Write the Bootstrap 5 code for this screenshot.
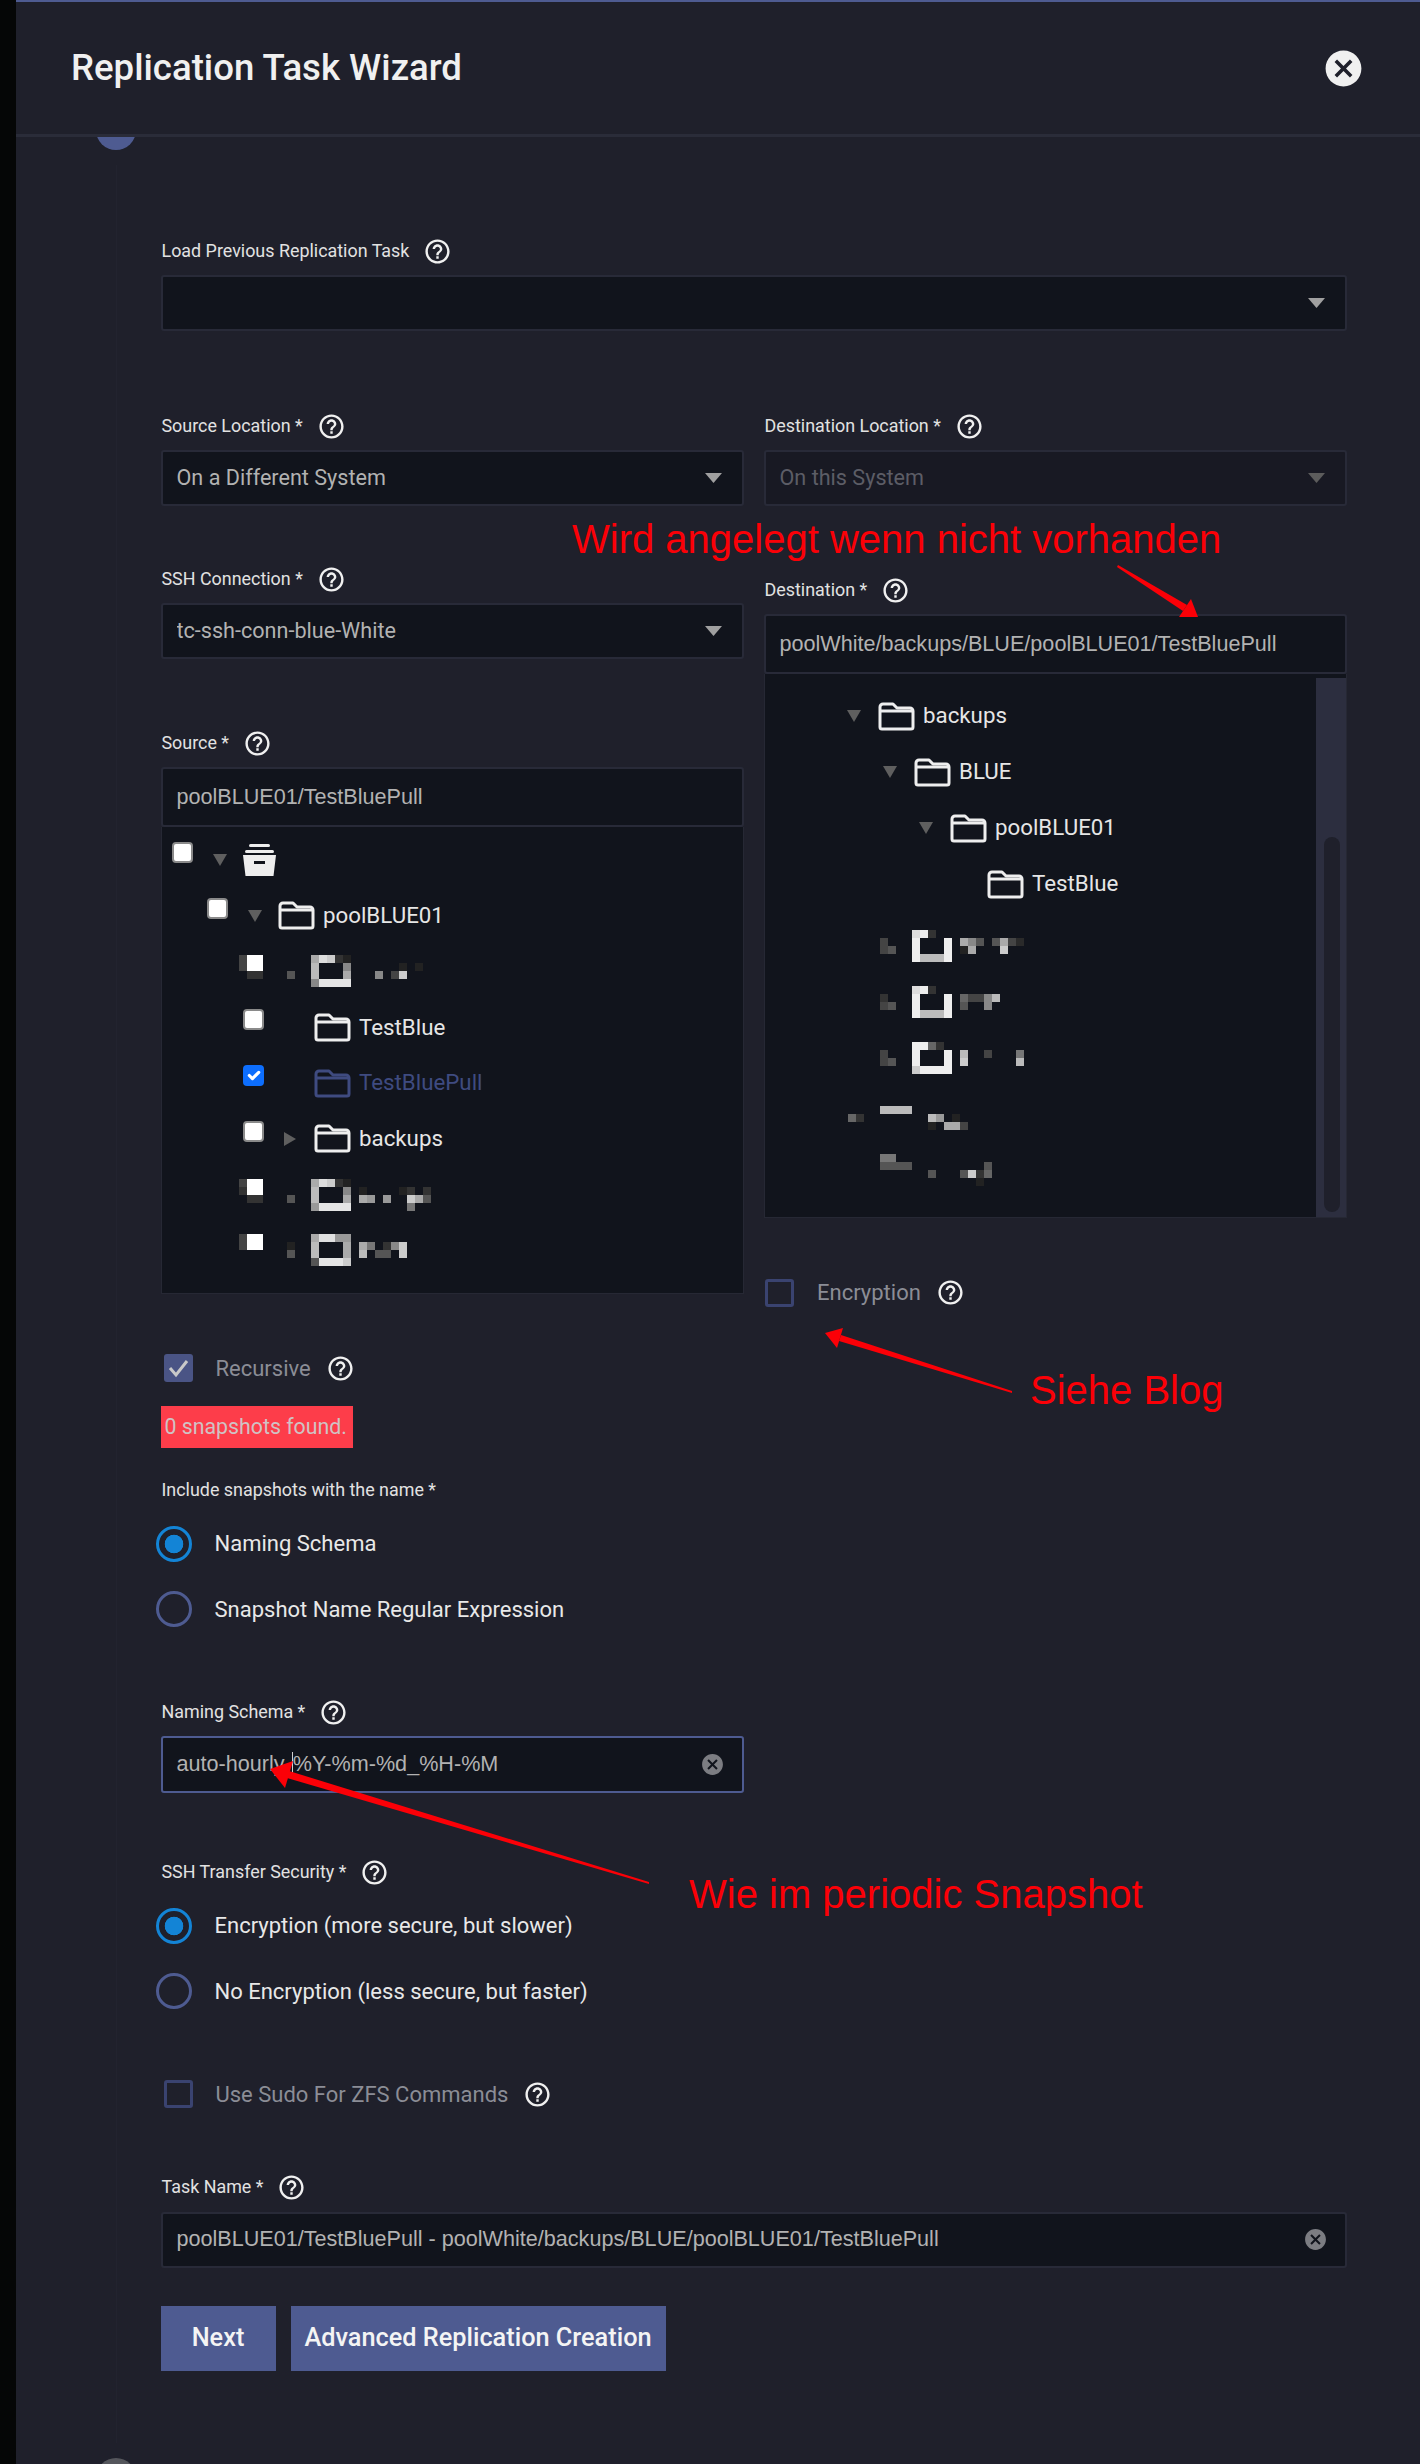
<!DOCTYPE html>
<html lang="en">

<head>
  <meta charset="UTF-8">
  <meta name="viewport" content="width=device-width, initial-scale=1.0">
  <title>Replication Task Wizard</title>
  <link rel="stylesheet" href="https://cdn.jsdelivr.net/npm/bootstrap@5.3.2/dist/css/bootstrap.min.css">
  <style>
    html, body { height: 100%; }
    body { background: #050606; font-family: Roboto, "Noto Sans", sans-serif; color: #e6e6e6; overflow: hidden; position: relative; }
    .wiz { margin-left: 16px; height: 2464px; background: #1f202b; border-top: 2px solid #4e5b91; }
    .wiz-head { height: 135px; padding: 0 55px; border-bottom: 3px solid #2a2c39; }
    .wiz-title { font-size: 36.6px; font-weight: 500; color: #f0f0f0; margin: 0; }
    .wiz-close { width: 43px; height: 43px; fill: #f0f0f0; }
    .wiz-body { height: 2327px; overflow: hidden; }
    .rail { width: 40px; margin-left: 80px; }
    .step-dot { width: 40px; height: 40px; border-radius: 50%; flex: none; }
    .step-now { background: #4e5b91; margin-top: -27px; }
    .step-next { background: #55565c; margin-top: 15px; }
    .rail-line { width: 1px; background: #22232f; margin-top: 15px; height: 2278px; flex: none; }
    .wiz-form { width: 1186px; margin-left: 24.5px; }
    .cols { gap: 20px; }
    .col-left { width: 583px; }
    .col-right { width: 583px; }
    .lbl { height: 24px; font-size: 17.9px; color: #e2e2e2; margin-bottom: 12px; padding-left: 1px; }
    .qm { width: 29px; height: 29px; fill: #f0f0f0; margin-left: 14px; flex: none; }
    .form-select, .form-control { border-radius: 3px; background-color: #11141c; border: 2px solid #282a38; color: #b2b2b2; height: 56px; font-size: 21.6px; padding: 0 44px 0 14px; box-shadow: none; }
    .form-select { background-image: url("data:image/svg+xml,%3Csvg xmlns='http://www.w3.org/2000/svg' viewBox='0 0 17 10'%3E%3Cpath fill='%23a0a0a0' d='M0 0h17l-8.5 10z'/%3E%3C/svg%3E"); background-size: 17px 10px; background-position: right 20px center; }
    .form-select:disabled { background-color: #181923; color: #5c5d66; background-image: url("data:image/svg+xml,%3Csvg xmlns='http://www.w3.org/2000/svg' viewBox='0 0 17 10'%3E%3Cpath fill='%235c5c5c' d='M0 0h17l-8.5 10z'/%3E%3C/svg%3E"); }
    .val { font-family: "Liberation Sans", Arial, sans-serif; font-size: 21.6px; }
    .path-box { height: 60px; }
    .clear-x { width: 25px; height: 25px; fill: #7c7d82; margin-left: auto; margin-right: -27px; flex: none; }
    .focus-box { border-color: #4e5b91; height: 57px; }
    .caret { width: 1px; height: 26px; background: #d0d0d0; margin-left: 0; }
    .tree { background: #11141c; border: 1px solid #262834; border-top: 0; font-size: 22.3px; }
    .tree-left { height: 467px; padding-top: 5px; }
    .tree-right { height: 544px; }
    .tree-inner { padding-top: 14px; }
    .t-row { height: 55.8px; }
    .t-row.d0 { padding-left: 10px; }
    .t-row.d1 { padding-left: 45px; }
    .t-row.d2 { padding-left: 81px; }
    .t-row .form-check-input { width: 21px; height: 21px; margin: 0 0 15px; border: 2px solid #8a8a8a; border-radius: 4px; flex: none; }
    .t-row .form-check-input:checked { background-color: #0d6efd; border: 0; background-size: 100%; }
    .tog { width: 50px; flex: none; padding-left: 20px; line-height: 0; }
    .tri { fill: #5f5f5f; }
    .fold { width: 37px; height: 29px; fill: none; stroke: #eeeeee; stroke-width: 3; stroke-linejoin: round; margin-right: 8.5px; flex: none; }
    .fold-sel { stroke: #3f4b80; }
    .name-sel { color: #3f4b80; }
    .arch { width: 33px; height: 33px; fill: #eeeeee; flex: none; }
    .mos-l { margin-left: 77px; }
    .r-row { height: 56px; }
    .r-d0 { padding-left: 82px; }
    .r-d1 { padding-left: 118px; }
    .r-d2 { padding-left: 154px; }
    .r-d3 { padding-left: 222px; }
    .r-row .tri-box { width: 31px; flex: none; line-height: 0; }
    .mos-r { margin: 17.5px 0 0 83px; align-self: flex-start; }
    .sbar { width: 30px; background: #2c2e3f; margin-top: 4px; flex: none; }
    .sthumb { width: 16px; height: 375px; background: #1f202b; border-radius: 8px; margin: 159px 0 0 8px; }
    .chk-row { font-size: 22px; color: #8b8d96; }
    .chk-row .qm { margin-left: 15px; }
    .chk { width: 29px; height: 28px; border-radius: 3px; margin: 0 23px 0 3px; flex: none; }
    .chk.enc-box { margin-left: 1.5px; }
    .chk-off { border: 3px solid #3a4370; }
    .chk-on { background: #4a5485; }
    .chk-on svg { display: block; width: 29px; height: 28px; fill: none; stroke: #c9c9c9; stroke-width: 3; }
    .snap-alert { width: 192px; height: 42px; background: #fd3d4a; color: #d0c2c4; font-size: 21.3px; padding-left: 4px; margin-top: 21.5px; }
    .rd { font-size: 22px; color: #e8e8e8; height: 36px; margin-left: -5px; }
    .rd .form-check-input { width: 36px; height: 36px; margin: 0 23px 0 0; background-color: transparent; background-image: none; border: 3px solid #4e5b91; flex: none; box-shadow: none; }
    .rd .form-check-input:checked { border-color: #1384d6; background-image: radial-gradient(circle, #1384d6 0 9px, transparent 9.6px); }
    .act-btn { height: 65px; background: #4e5b91; border: 0; border-radius: 0; color: #f4f4f4; font-size: 25.3px; font-weight: 500; padding: 0; }
    .act-next { width: 115px; }
    .act-adv { width: 375px; margin-left: 15px; }
    /* spacing of the fields, top to bottom */
    .sp-load { margin-top: 102px; }
    .sp-loc { margin-top: 83px; }
    .sp-ssh { margin-top: 61px; }
    .sp-src { margin-top: 72px; }
    .sp-dst { margin-top: 72px; }
    .sp-enc { margin-top: 58px; }
    .sp-rec { margin-top: 57.5px; }
    .sp-inc { margin-top: 30px; }
    .sp-r1 { margin-top: 23.5px; }
    .sp-r2 { margin-top: 29.5px; }
    .sp-nam { margin-top: 73px; }
    .sp-ssec { margin-top: 67px; }
    .sp-sudo { margin-top: 68.5px; }
    .sp-task { margin-top: 65px; }
    .sp-btn { margin-top: 38px; }
    .note { position: absolute; font-family: "Liberation Sans", Arial, sans-serif; font-size: 40px; line-height: 44px; color: #fb0007; white-space: nowrap; }
    .note-a { left: 572px; top: 517px; }
    .note-b { left: 1030px; top: 1368px; }
    .note-c { left: 689px; top: 1872px; }
    .arrows { position: absolute; left: 0; top: 0; pointer-events: none; }
  </style>
</head>

<body>

<svg width="0" height="0" class="position-absolute">
  <symbol id="i-help" viewBox="0 0 24 24"><path d="M11 18h2v-2h-2v2zm1-16C6.48 2 2 6.48 2 12s4.48 10 10 10 10-4.48 10-10S17.52 2 12 2zm0 18c-4.41 0-8-3.59-8-8s3.59-8 8-8 8 3.59 8 8-3.59 8-8 8zm0-14c-2.21 0-4 1.79-4 4h2c0-1.1.9-2 2-2s2 .9 2 2c0 2-3 1.75-3 5h2c0-2.25 3-2.5 3-5 0-2.21-1.79-4-4-4z"/></symbol>
  <symbol id="i-cancel" viewBox="0 0 24 24"><path d="M12 2C6.47 2 2 6.47 2 12s4.47 10 10 10 10-4.47 10-10S17.53 2 12 2zm5 13.59L15.59 17 12 13.41 8.41 17 7 15.59 10.59 12 7 8.41 8.41 7 12 10.59 15.59 7 17 8.41 13.41 12 17 15.59z"/></symbol>
  <symbol id="i-fold" viewBox="0 0 37 29"><path d="M2 5a3 3 0 0 1 3-3h10l4 4h13a3 3 0 0 1 3 3v16a2 2 0 0 1-2 2H4a2 2 0 0 1-2-2z"/><path d="M2 9h33"/></symbol>
</svg>

<div class="wiz">
  <div class="wiz-head d-flex align-items-center justify-content-between">
    <h1 class="wiz-title">Replication Task Wizard</h1>
    <svg class="wiz-close"><use href="#i-cancel"/></svg>
  </div>

  <div class="wiz-body d-flex">
    <div class="rail d-flex flex-column align-items-center flex-shrink-0">
      <div class="step-dot step-now"></div>
      <div class="rail-line"></div>
      <div class="step-dot step-next"></div>
    </div>

    <div class="wiz-form">
      <div class="sp-load">
        <div class="lbl d-flex align-items-center">Load Previous Replication Task<svg class="qm"><use href="#i-help"/></svg></div>
        <select class="form-select"><option></option></select>
      </div>

      <div class="cols d-flex sp-loc">
        <div class="col-left flex-shrink-0">
          <div class="lbl d-flex align-items-center">Source Location *<svg class="qm"><use href="#i-help"/></svg></div>
          <select class="form-select"><option>On a Different System</option></select>

          <div class="sp-ssh">
            <div class="lbl d-flex align-items-center">SSH Connection *<svg class="qm"><use href="#i-help"/></svg></div>
            <select class="form-select"><option>tc-ssh-conn-blue-White</option></select>
          </div>

          <div class="sp-src">
            <div class="lbl d-flex align-items-center">Source *<svg class="qm"><use href="#i-help"/></svg></div>
            <div class="form-control val path-box d-flex align-items-center">poolBLUE01/TestBluePull</div>
            <div class="tree tree-left">
              <div class="t-row d0 d-flex align-items-center">
                <input class="form-check-input" type="checkbox">
                <span class="tog"><svg width="14" height="12"><path class="tri" d="M0 0h14l-7 12z"/></svg></span>
                <svg class="arch" viewBox="0 0 33 33"><rect x="6" y="1" width="21" height="3" rx="1.5"/><rect x="2" y="7" width="29" height="3" rx="1.5"/><path fill-rule="evenodd" d="M0 12h33l-2.5 21h-28zM11 18v3h11v-3z"/></svg>
              </div>
              <div class="t-row d1 d-flex align-items-center">
                <input class="form-check-input" type="checkbox">
                <span class="tog"><svg width="14" height="12"><path class="tri" d="M0 0h14l-7 12z"/></svg></span>
                <svg class="fold"><use href="#i-fold"/></svg><span>poolBLUE01</span>
              </div>
              <div class="t-row d-flex align-items-center"><svg class="mos-l" width="200" height="32" data-cells="0,0,#444 0,1,#444 1,0,#fff 2,0,#fff 1,1,#fff 2,1,#fff 1,2,#333 2,2,#333 6,2,#555 9,0,#aaa 10,0,#ddd 11,0,#ccc 12,0,#333 13,0,#222 9,1,#bbb 13,1,#888 9,2,#bbb 13,2,#aaa 9,3,#888 10,3,#e5e5e5 11,3,#e5e5e5 12,3,#e5e5e5 13,3,#e5e5e5 17,2,#888 19,2,#444 20,2,#ccc 20,1,#222 22,1,#222"></svg></div>
              <div class="t-row d2 d-flex align-items-center">
                <input class="form-check-input" type="checkbox">
                <span class="tog"></span>
                <svg class="fold"><use href="#i-fold"/></svg><span>TestBlue</span>
              </div>
              <div class="t-row d2 d-flex align-items-center">
                <input class="form-check-input" type="checkbox" checked>
                <span class="tog"></span>
                <svg class="fold fold-sel"><use href="#i-fold"/></svg><span class="name-sel">TestBluePull</span>
              </div>
              <div class="t-row d2 d-flex align-items-center">
                <input class="form-check-input" type="checkbox">
                <span class="tog"><svg width="12" height="14"><path class="tri" d="M0 0l12 7-12 7z"/></svg></span>
                <svg class="fold"><use href="#i-fold"/></svg><span>backups</span>
              </div>
              <div class="t-row d-flex align-items-center"><svg class="mos-l" width="200" height="32" data-cells="0,0,#444 0,1,#333 1,0,#fff 2,0,#fff 1,1,#fff 2,1,#fff 1,2,#333 2,2,#333 6,2,#555 9,0,#aaa 10,0,#ddd 11,0,#ccc 12,0,#333 13,0,#222 9,1,#bbb 13,1,#888 9,2,#bbb 13,2,#aaa 9,3,#999 10,3,#e5e5e5 11,3,#e5e5e5 12,3,#e5e5e5 13,3,#e5e5e5 15,1,#222 15,2,#aaa 16,2,#999 18,2,#999 20,1,#222 21,1,#333 23,1,#333 21,2,#ccc 22,2,#aaa 23,2,#555 21,3,#777"></svg></div>
              <div class="t-row d-flex align-items-center"><svg class="mos-l" width="200" height="32" data-cells="0,0,#444 0,1,#444 1,0,#fff 2,0,#fff 1,1,#fff 2,1,#fff 6,1,#222 6,2,#555 9,0,#aaa 10,0,#e0e0e0 11,0,#e0e0e0 12,0,#999 13,0,#999 9,1,#bbb 13,1,#aaa 9,2,#bbb 13,2,#aaa 9,3,#555 10,3,#e5e5e5 11,3,#e5e5e5 12,3,#e5e5e5 13,3,#ccc 15,1,#aaa 16,1,#777 18,1,#333 19,1,#888 20,1,#ccc 15,2,#bbb 17,2,#555 18,2,#555 20,2,#ccc"></svg></div>
            </div>
          </div>

          <div class="chk-row d-flex align-items-center sp-rec">
            <span class="chk chk-on"><svg viewBox="0 0 29 28"><path d="M6 14l6 7 11-14"/></svg></span>Recursive<svg class="qm"><use href="#i-help"/></svg>
          </div>
          <div class="snap-alert d-flex align-items-center">0 snapshots found.</div>

          <div class="lbl d-flex align-items-center sp-inc">Include snapshots with the name *</div>
          <div class="rd d-flex align-items-center sp-r1"><input class="form-check-input" type="radio" name="snap" checked>Naming Schema</div>
          <div class="rd d-flex align-items-center sp-r2"><input class="form-check-input" type="radio" name="snap">Snapshot Name Regular Expression</div>

          <div class="sp-nam">
            <div class="lbl d-flex align-items-center">Naming Schema *<svg class="qm"><use href="#i-help"/></svg></div>
            <div class="form-control val focus-box d-flex align-items-center">auto-hourly-<span class="caret"></span>%Y-%m-%d_%H-%M<svg class="clear-x"><use href="#i-cancel"/></svg></div>
          </div>

          <div class="sp-ssec">
            <div class="lbl d-flex align-items-center">SSH Transfer Security *<svg class="qm"><use href="#i-help"/></svg></div>
            <div class="rd d-flex align-items-center sp-r1"><input class="form-check-input" type="radio" name="sec" checked>Encryption (more secure, but slower)</div>
            <div class="rd d-flex align-items-center sp-r2"><input class="form-check-input" type="radio" name="sec">No Encryption (less secure, but faster)</div>
          </div>

          <div class="chk-row d-flex align-items-center sp-sudo">
            <span class="chk chk-off"></span>Use Sudo For ZFS Commands<svg class="qm"><use href="#i-help"/></svg>
          </div>
        </div>

        <div class="col-right flex-shrink-0">
          <div class="lbl d-flex align-items-center">Destination Location *<svg class="qm"><use href="#i-help"/></svg></div>
          <select class="form-select" disabled><option>On this System</option></select>

          <div class="sp-dst">
            <div class="lbl d-flex align-items-center">Destination *<svg class="qm"><use href="#i-help"/></svg></div>
            <div class="form-control val path-box d-flex align-items-center">poolWhite/backups/BLUE/poolBLUE01/TestBluePull</div>
            <div class="tree tree-right d-flex">
              <div class="tree-inner flex-grow-1">
                <div class="r-row r-d0 d-flex align-items-center"><span class="tri-box"><svg width="14" height="12"><path class="tri" d="M0 0h14l-7 12z"/></svg></span><svg class="fold"><use href="#i-fold"/></svg><span>backups</span></div>
                <div class="r-row r-d1 d-flex align-items-center"><span class="tri-box"><svg width="14" height="12"><path class="tri" d="M0 0h14l-7 12z"/></svg></span><svg class="fold"><use href="#i-fold"/></svg><span>BLUE</span></div>
                <div class="r-row r-d2 d-flex align-items-center"><span class="tri-box"><svg width="14" height="12"><path class="tri" d="M0 0h14l-7 12z"/></svg></span><svg class="fold"><use href="#i-fold"/></svg><span>poolBLUE01</span></div>
                <div class="r-row r-d3 d-flex align-items-center"><svg class="fold"><use href="#i-fold"/></svg><span>TestBlue</span></div>
                <div class="r-row d-flex"><svg class="mos-r" width="200" height="32" data-cells="4,1,#444 4,2,#444 5,2,#555 8,0,#ddd 9,0,#eee 10,0,#333 8,1,#eee 12,1,#eee 8,2,#eee 12,2,#eee 8,3,#eee 9,3,#bbb 10,3,#bbb 11,3,#bbb 12,3,#eee 14,1,#aaa 15,1,#888 16,1,#555 18,1,#555 19,1,#aaa 20,1,#444 21,1,#2a2a2a 14,2,#222 15,2,#aaa 19,2,#ccc"></svg></div>
                <div class="r-row d-flex"><svg class="mos-r" width="200" height="32" data-cells="4,1,#333 4,2,#444 5,2,#555 8,0,#ddd 9,0,#eee 10,0,#333 8,1,#eee 12,1,#eee 8,2,#eee 12,2,#eee 8,3,#eee 9,3,#bbb 10,3,#bbb 11,3,#bbb 12,3,#eee 14,1,#666 15,1,#444 16,1,#444 17,1,#888 18,1,#bbb 14,2,#555 17,2,#888"></svg></div>
                <div class="r-row d-flex"><svg class="mos-r" width="200" height="32" data-cells="4,1,#444 4,2,#444 5,2,#555 8,0,#eee 9,0,#eee 10,0,#666 11,0,#333 8,1,#eee 12,1,#eee 8,2,#eee 12,2,#eee 8,3,#ccc 9,3,#eee 10,3,#eee 11,3,#eee 12,3,#eee 14,1,#bbb 17,1,#444 21,1,#777 14,2,#ccc 21,2,#bbb"></svg></div>
                <div class="r-row d-flex"><svg class="mos-r" width="200" height="32" data-cells="4,1,#bbb 5,1,#bbb 6,1,#bbb 7,1,#bbb 0,2,#666 1,2,#333 10,2,#bbb 11,2,#999 13,2,#222 10,3,#222 12,3,#aaa 13,3,#aaa 14,3,#444"></svg></div>
                <div class="r-row d-flex"><svg class="mos-r" width="200" height="32" data-cells="4,0,#777 5,0,#777 4,1,#555 5,1,#555 6,1,#555 7,1,#555 17,1,#555 10,2,#555 14,2,#555 15,2,#ccc 16,2,#333 17,2,#666 16,3,#222"></svg></div>
              </div>
              <div class="sbar"><div class="sthumb"></div></div>
            </div>
          </div>

          <div class="chk-row d-flex align-items-center sp-enc">
            <span class="chk chk-off enc-box"></span>Encryption<svg class="qm"><use href="#i-help"/></svg>
          </div>
        </div>
      </div>

      <div class="sp-task">
        <div class="lbl d-flex align-items-center">Task Name *<svg class="qm"><use href="#i-help"/></svg></div>
        <div class="form-control val d-flex align-items-center">poolBLUE01/TestBluePull - poolWhite/backups/BLUE/poolBLUE01/TestBluePull<svg class="clear-x"><use href="#i-cancel"/></svg></div>
      </div>

      <div class="d-flex sp-btn">
        <button class="btn act-btn act-next" type="button">Next</button>
        <button class="btn act-btn act-adv" type="button">Advanced Replication Creation</button>
      </div>
    </div>
  </div>
</div>

<div class="note note-a">Wird angelegt wenn nicht vorhanden</div>
<div class="note note-b">Siehe Blog</div>
<div class="note note-c">Wie im periodic Snapshot</div>

<svg class="arrows" width="1420" height="2464">
  <g fill="#fb0007">
    <path d="M1118 565L1117 567L1183 611L1187 605z"/>
    <path d="M1198 617L1179 617L1191 599z"/>
    <path d="M1012 1391L1012 1393L839 1341L841 1335z"/>
    <path d="M825 1333L843 1328L837 1348z"/>
    <path d="M649 1882L649 1884L287 1778L289 1771z"/>
    <path d="M270 1769L293 1761L285 1788z"/>
  </g>
</svg>

<script>
  // the blurred rows of the tree, 8px cells
  document.querySelectorAll('svg[data-cells]').forEach(svg => {
    svg.innerHTML = svg.dataset.cells.split(' ').map(cell => {
      const [x, y, color] = cell.split(',');
      return `<rect x="${x * 8}" y="${y * 8}" width="8" height="8" fill="${color}" shape-rendering="crispEdges"/>`;
    }).join('');
  });
</script>
<script src="https://cdn.jsdelivr.net/npm/bootstrap@5.3.2/dist/js/bootstrap.bundle.min.js"></script>
</body>
</html>
